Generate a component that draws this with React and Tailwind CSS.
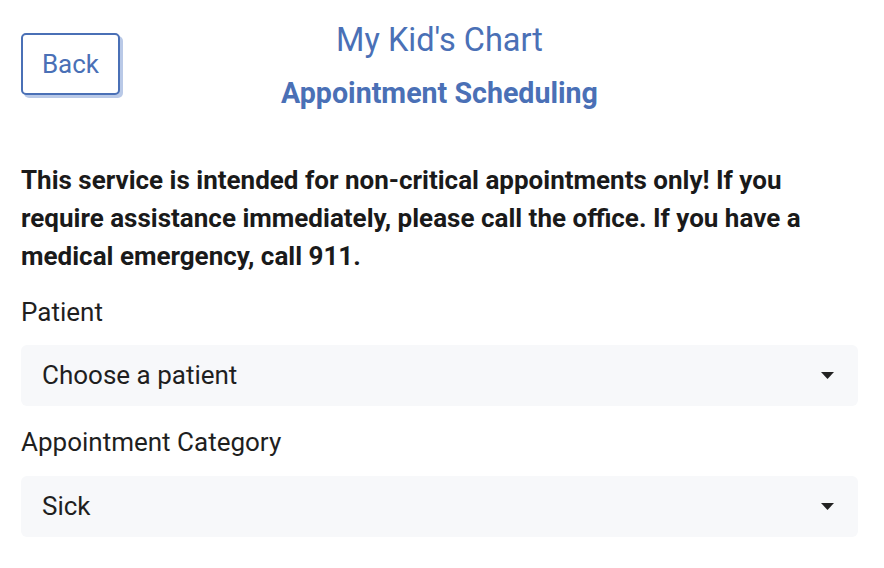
import { useState } from "react";

const font = { fontFamily: "Roboto, 'Noto Sans', sans-serif" };

function Caret() {
  return (
    <svg width="13" height="7" viewBox="0 0 13 7" className="shrink-0">
      <path d="M0 0 H13 L6.5 7 Z" fill="#222" />
    </svg>
  );
}

function SelectBox({ value }) {
  return (
    <div className="flex items-center justify-between h-[61px] rounded-md bg-[#f7f8fa] pl-[21px] pr-[24px]">
      <span className="text-[26px] text-[#1f1f1f]">{value}</span>
      <Caret />
    </div>
  );
}

export default function App() {
  const [patient] = useState("Choose a patient");
  const [category] = useState("Sick");

  return (
    <div className="bg-white min-h-screen pl-[21px] pr-[26px] pt-[20px] text-[#1f1f1f]" style={font}>
      <div className="grid grid-cols-[1fr_auto_1fr] items-start">
        <div className="pt-[13px]">
          <button className="w-[99px] h-[62px] rounded-[5px] border-2 border-[#4a70b6] bg-white text-[#4a70b6] text-[26px] shadow-[3px_3px_0_#b9c9e7]">
            Back
          </button>
        </div>
        <div className="flex flex-col items-center text-[#4a70b6]">
          <h1 className="text-[32.5px] leading-[40px]">My Kid's Chart</h1>
          <h2 className="text-[28.6px] font-bold leading-[36px] mt-[15px]">Appointment Scheduling</h2>
        </div>
        <div />
      </div>

      <p className="mt-[50px] text-[26px] font-bold leading-[38px] text-[#1a1a1a]">
        This service is intended for non-critical appointments only! If you require assistance immediately, please call the office. If you have a medical emergency, call 911.
      </p>

      <div className="mt-[22px] text-[26px] leading-[30px]">Patient</div>
      <div className="mt-[18px]">
        <SelectBox value={patient} />
      </div>

      <div className="mt-[21px] text-[26px] leading-[30px]">Appointment Category</div>
      <div className="mt-[19px]">
        <SelectBox value={category} />
      </div>
    </div>
  );
}
